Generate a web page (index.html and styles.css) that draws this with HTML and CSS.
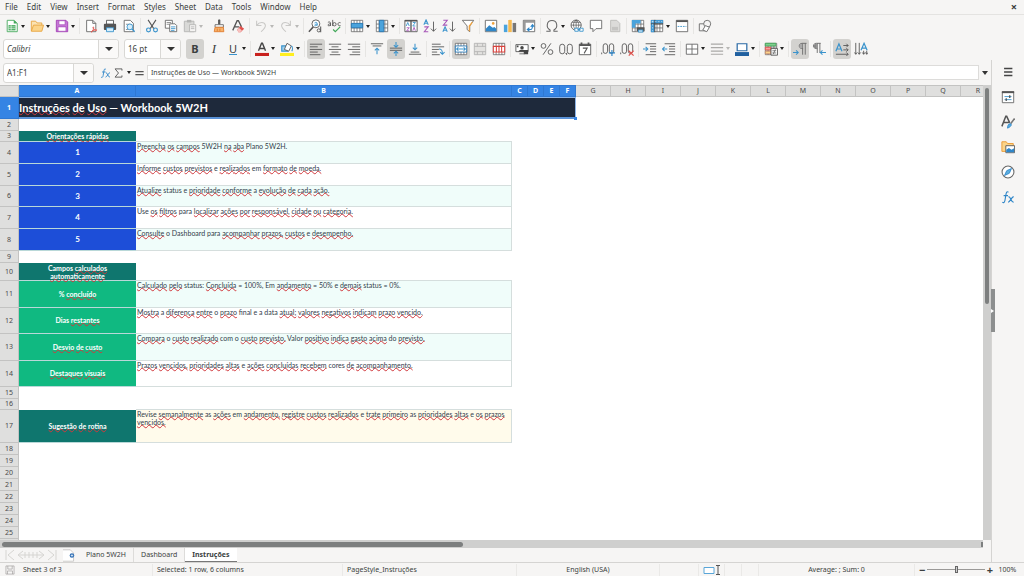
FILE: index.html
```html
<!DOCTYPE html>
<html lang="pt-BR">
<head>
<meta charset="utf-8">
<meta name="viewport" content="width=device-width, initial-scale=1">
<title>Workbook 5W2H</title>
<link rel="stylesheet" href="styles.css">
</head>
<body>
<svg class="sprite" aria-hidden="true">
  <symbol id="new" viewBox="0 0 16 16"><path d="M2.5 1.500h8l3.500 3.500v9.500H2.500z" fill="#fff" stroke="#43a85a"/><path d="M4 7h8v6H4z" fill="#43a85a"/><path d="M4 9h8M4 11h8M7 7v6" stroke="#fff" stroke-width=".7"/><path d="M10 1v4h4z" fill="#43a85a"/></symbol>
  <symbol id="open" viewBox="0 0 16 16"><path d="M1.500 13.500v-11h5l1.500 2h5.500v3" fill="#fbe3b3" stroke="#e8a33d"/><path d="M1.500 14l2.500-7h11.500l-2 7z" fill="#fbd48a" stroke="#e8a33d"/></symbol>
  <symbol id="save" viewBox="0 0 16 16"><path d="M1.500 1.500h11l2 2v11h-13z" fill="#c678d6" stroke="#a13fb5"/><path d="M4.500 2h7v4.500h-7zM3.500 9h9v5h-9z" fill="#fff" stroke="#a13fb5" stroke-width=".7"/></symbol>
  <symbol id="pdf" viewBox="0 0 16 16"><path d="M3 1.500h7l3.500 3.500v9.500H3z" fill="#fff" stroke="#666"/><path d="M10 1.500V5h3.500" fill="none" stroke="#666"/><path d="M8 15c2-1 3.500-4 3-5.500s-1.500.5.5 2.500 3 1.500 3 .5-4 0-6.500 2.500" fill="#fff" stroke="#e0524d"/></symbol>
  <symbol id="print" viewBox="0 0 16 16"><path d="M4 1.500h8V6H4z" fill="#fff" stroke="#555"/><rect x="1" y="5.500" width="14" height="7" rx="1" fill="#555"/><path d="M4 10h8v4.500H4z" fill="#d7eefb" stroke="#3a93cc"/></symbol>
  <symbol id="preview" viewBox="0 0 16 16"><path d="M2.500 1.500h7l3.500 3.500v9.500H2.500z" fill="#fff" stroke="#666"/><path d="M4.500 6h5M4.500 12h3" stroke="#888"/><circle cx="9" cy="9" r="3.300" fill="#d7eefb" stroke="#3a93cc"/><path d="M11.500 11.500l3 3" stroke="#3a93cc" stroke-width="1.500"/></symbol>
  <symbol id="cut" viewBox="0 0 16 16"><path d="M3.500 1l6.500 10M12.500 1L6 11" stroke="#555" stroke-width="1.200"/><circle cx="4" cy="12.500" r="2.200" fill="none" stroke="#3a93cc" stroke-width="1.300"/><circle cx="12" cy="12.500" r="2.200" fill="none" stroke="#3a93cc" stroke-width="1.300"/></symbol>
  <symbol id="copy" viewBox="0 0 16 16"><path d="M1.500 1.500h8v9h-8z" fill="#fff" stroke="#666"/><path d="M3 4h5M3 6h3" stroke="#888"/><path d="M6.500 5.500h6l2 2v7h-8z" fill="#fff" stroke="#666"/><path d="M8 9h5M8 11h5M8 13h4" stroke="#3a93cc"/></symbol>
  <symbol id="paste" viewBox="0 0 16 16"><path d="M1.500 2.500h11v12h-11z" fill="#d9d9d7" stroke="#b5b5b3"/><path d="M4.500 1h5v3h-5z" fill="#b5b5b3"/><path d="M7.500 6.500h7v8h-7z" fill="#f6f5f4" stroke="#b5b5b3"/><path d="M9 9h4M9 11h4" stroke="#b5b5b3"/></symbol>
  <symbol id="clone" viewBox="0 0 16 16"><path d="M7.500 1h1.500v5h-1.500z" fill="#555" stroke="#555"/><path d="M3.500 6.500h9.500v3H3.500z" fill="#fff" stroke="#666"/><path d="M3.500 9.500h9.500l.5 5h-11z" fill="#f6b26b" stroke="#e07b2f"/><path d="M6 11v3M9 11v3" stroke="#e07b2f"/></symbol>
  <symbol id="clear" viewBox="0 0 16 16"><path d="M2 13L7 2h1.500L12 9M4 9h5.500" fill="none" stroke="#555" stroke-width="1.500"/><path d="M7 12l4-4 4 3-4 4H8.500z" fill="#e0524d"/><path d="M7 12l2-2 3.500 3-2 2H8.500z" fill="#f7c1bf"/></symbol>
  <symbol id="undo" viewBox="0 0 16 16"><path d="M3 2v5.500h5.500M3.500 7C6 3 12 3 13 7c.5 3-2 5-5 7.500" fill="none" stroke="#c9c8c6" stroke-width="1.200"/></symbol>
  <symbol id="redo" viewBox="0 0 16 16"><path d="M13 2v5.500H7.500M12.500 7C10 3 4 3 3 7c-.5 3 2 5 5 7.500" fill="none" stroke="#c9c8c6" stroke-width="1.200"/></symbol>
  <symbol id="find" viewBox="0 0 16 16"><circle cx="9" cy="5.500" r="4.500" fill="#fff" stroke="#555"/><path d="M6 9l-5 5.500" stroke="#555" stroke-width="1.700"/><path d="M7.500 4.500c1-1 3-.8 3 .5v2.500M10.500 5.800c-3-.2-3.500 1.700-2 1.900 1 0 2-.7 2-1.400" fill="none" stroke="#3a93cc"/><path d="M14.500 8.500v6.500" stroke="#555" stroke-width="1.200"/><circle cx="12.300" cy="13" r="1.800" fill="none" stroke="#555"/></symbol>
  <symbol id="spell" viewBox="0 0 16 16"><path d="M1 4c1-1 3-.8 3 .5V8M4 5.500C1 5.200.5 7.800 2 7.800c1 0 2-.7 2-1.400M6.500 1v7" fill="none" stroke="#555"/><circle cx="8.500" cy="6" r="1.900" fill="none" stroke="#555"/><path d="M15.500 4.300c-4-1.500-4 4.500 0 3.300" fill="none" stroke="#555"/><path d="M7 12l2.500 2.500L15 9" fill="none" stroke="#43a85a" stroke-width="1.400"/></symbol>
  <symbol id="grid" viewBox="0 0 16 16"><path d="M1.500 1.500h13v13h-13zM1.500 5.800h13M1.500 10.200h13M4.700 1.500v13M8 1.500v13M11.300 1.500v13" fill="#fff" stroke="#666" stroke-width=".9"/></symbol>
  <symbol id="row" viewBox="0 0 16 16"><use href="#grid"/><path d="M1.500 5h13v5h-13z" fill="#4aa3dc" stroke="#2577b5"/></symbol>
  <symbol id="col" viewBox="0 0 16 16"><use href="#grid"/><path d="M5 1.500h5v13H5z" fill="#4aa3dc" stroke="#2577b5"/></symbol>
  <symbol id="sort" viewBox="0 0 16 16"><path d="M1 1.500h14v13H1z" fill="#fff" stroke="#555"/><path d="M1 2h14M8 2v12" stroke="#555" stroke-width="1.500"/><path d="M2.500 8l1.800-4 1.700 4M10 4h3l-3 4h3" fill="none" stroke="#3a93cc"/><path d="M3 10h3l-3 3.500h3M10 13.500l1.500-4 1.500 4" fill="none" stroke="#a858b8"/></symbol>
  <symbol id="az" viewBox="0 0 16 16"><path d="M1 6.500L3.500 1 6 6.500M2 4.800h3" fill="none" stroke="#3a93cc" stroke-width="1.200"/><path d="M1.500 9H6l-4.500 5.500H6" fill="none" stroke="#a858b8" stroke-width="1.200"/><path d="M12 3v11M9 11l3 3 3-3" fill="none" stroke="#555"/></symbol>
  <symbol id="za" viewBox="0 0 16 16"><path d="M1.500 1.500H6L1.500 7H6" fill="none" stroke="#a858b8" stroke-width="1.200"/><path d="M1 14.500L3.500 9 6 14.500M2 12.800h3" fill="none" stroke="#3a93cc" stroke-width="1.200"/><path d="M12 3v11M9 11l3 3 3-3" fill="none" stroke="#555"/></symbol>
  <symbol id="filter" viewBox="0 0 16 16"><path d="M1.500 1.500h13L10 8v6.500L7 12V8z" fill="#fff" stroke="#666"/><path d="M13 3.500L9.500 8v6" fill="none" stroke="#f0a23c" stroke-width="1.400"/></symbol>
  <symbol id="image" viewBox="0 0 16 16"><path d="M1.500 1.500h13v13h-13z" fill="#fff" stroke="#666"/><path d="M2 14v-3l4-4 4 3 2-1 2 2v3z" fill="#2f86c8"/><circle cx="10.500" cy="5" r="1.500" fill="#f0a23c"/></symbol>
  <symbol id="chart" viewBox="0 0 16 16"><path d="M1 6.500h4V15H1z" fill="#4aa3dc"/><path d="M6 1h4v14H6z" fill="#f6b94f"/><path d="M11 4.500h4V15h-4z" fill="#777"/></symbol>
  <symbol id="pivot" viewBox="0 0 16 16"><path d="M1.500 1.500h13v13h-13z" fill="#fff" stroke="#666"/><path d="M2 3h12M3 2v12" stroke="#9a9a9a" stroke-width="2.400"/><path d="M7 12h3c2 0 2-1.500 2-4.500M10 9l2-2.500L14 9M8.500 10L6 12l2.500 2" fill="none" stroke="#2f86c8" stroke-width="1.200"/></symbol>
  <symbol id="omega" viewBox="0 0 16 16"><path d="M1.500 14h4.300v-1.500C.5 9.500 2 1.800 8 1.800s7.500 7.700 2.200 10.700V14h4.300" fill="none" stroke="#666" stroke-width="1.200"/></symbol>
  <symbol id="link" viewBox="0 0 16 16"><circle cx="7" cy="7" r="5.800" fill="#fff" stroke="#555"/><path d="M7 1.200v11.600M1.200 7h11.600M2.500 3.800h9M7 1.200c-4 3-4 8 0 11.600M7 1.200c4 3 4 8 0 11.600" fill="none" stroke="#555" stroke-width=".8"/><path d="M5.500 10.500h4v3.500h-4zM11 10.500h4v3.500h-4zM8.500 12.200h3.500" fill="#fff" stroke="#3a93cc"/></symbol>
  <symbol id="comment" viewBox="0 0 16 16"><path d="M1.500 1.500h13v9.500H8l-3.500 3.500V11h-3z" fill="#fff" stroke="#666"/></symbol>
  <symbol id="header" viewBox="0 0 16 16"><path d="M3 1.500h7l3.500 3.500v9.500H3z" fill="#dcdbd9" stroke="#bbbab8"/><path d="M4.500 9h7v4h-7z" fill="#c5c4c2"/></symbol>
  <symbol id="area" viewBox="0 0 16 16"><use href="#grid"/><path d="M1 1h10v4H1zM1 5h4v5H1z" fill="#4aa3dc"/><path d="M6.500 9.500h9v4.500h-9z" fill="#555"/><path d="M8.500 12.500h5V15h-5z" fill="#d7eefb" stroke="#3a93cc"/></symbol>
  <symbol id="freeze" viewBox="0 0 16 16"><use href="#grid"/><path d="M1 1h14v4H1zM1 1h4v14H1z" fill="#3f97d2"/><path d="M1 5.500h14M5.500 1v14" stroke="#444"/><path d="M2 3h12M3 2v12" stroke="#fff" stroke-width=".6" stroke-dasharray="2 1.500"/></symbol>
  <symbol id="split" viewBox="0 0 16 16"><path d="M1.500 1.500h13v13h-13z" fill="#fff" stroke="#666"/><path d="M1.500 2.500h13" stroke="#555" stroke-width="2"/><path d="M3 8.500h10" stroke="#3a93cc" stroke-dasharray="2 1"/></symbol>
  <symbol id="shapes" viewBox="0 0 16 16"><path d="M1.500 5.500h8v8h-8z" fill="none" stroke="#666"/><circle cx="10.500" cy="5.500" r="4" fill="#f6f5f4" stroke="#666"/><path d="M8.500 7.500l4.500 2-3 5-4.500-2z" fill="#fff" stroke="#666"/></symbol>
  <symbol id="fontcolor" viewBox="0 0 16 16"><path d="M4 10L7.500 1.500h1L12 10M5.300 7.500h5.500" fill="none" stroke="#444" stroke-width="1.600"/><path d="M0 12.500h16V16H0z" fill="#c9211e"/></symbol>
  <symbol id="highlight" viewBox="0 0 16 16"><path d="M2 4.500h7v6H2z" fill="#9fd0ee" stroke="#3a93cc" stroke-width="1.300"/><path d="M8 1.500l5 3-3 6-5-2z" fill="#fff" stroke="#555"/><path d="M13 4.500c1.500 1 1.500 4 .5 6" fill="none" stroke="#3a93cc" stroke-width="1.300"/><path d="M0 12.500h16V16H0z" fill="#ffee1f"/></symbol>
  <symbol id="left" viewBox="0 0 16 16"><path d="M1 2.500h14M1 5.500h9M1 8.500h14M1 11.500h9M1 14.500h12" stroke="#555"/></symbol>
  <symbol id="center" viewBox="0 0 16 16"><path d="M1 2.500h14M4 5.500h8M1 8.500h14M4 11.500h8M2 14.500h12" stroke="#555"/></symbol>
  <symbol id="right" viewBox="0 0 16 16"><path d="M1 2.500h14M6 5.500h9M1 8.500h14M6 11.500h9M3 14.500h12" stroke="#555"/></symbol>
  <symbol id="top" viewBox="0 0 16 16"><path d="M1 2h14M3 4.500h10" stroke="#555"/><path d="M8 14V7M5.500 9.500L8 7l2.500 2.500" fill="none" stroke="#3a93cc" stroke-width="1.200"/></symbol>
  <symbol id="middle" viewBox="0 0 16 16"><path d="M1 7h14M1 9.500h14" stroke="#555"/><path d="M8 0v5.500M5.500 3.500L8 6l2.500-2.500M8 16v-5.500M5.500 13L8 10.500l2.500 2.500" fill="none" stroke="#3a93cc" stroke-width="1.200"/></symbol>
  <symbol id="bottom" viewBox="0 0 16 16"><path d="M1 14h14M3 11.500h10" stroke="#555"/><path d="M8 2v7M5.500 6.500L8 9l2.500-2.500" fill="none" stroke="#3a93cc" stroke-width="1.200"/></symbol>
  <symbol id="wrap" viewBox="0 0 16 16"><path d="M1 2.500h10M1 5.500h14M1 8.500h8M1 11.500h6M1 14.500h9" stroke="#555"/><path d="M9 8c3 0 4 1 4 5M10.500 11.500L13 14l2.500-2.500" fill="none" stroke="#3a93cc" stroke-width="1.200"/></symbol>
  <symbol id="merge" viewBox="0 0 16 16"><use href="#grid"/><path d="M1.500 4.500h13v7h-13z" fill="#fff" stroke="#2577b5"/><path d="M3 8h10M5 6L3 8l2 2M11 6l2 2-2 2" fill="none" stroke="#3a93cc" stroke-width="1.200"/></symbol>
  <symbol id="mergecells" viewBox="0 0 16 16"><path d="M1.500 1.500h13v13h-13zM1.500 5h13M1.500 11h13M5 1.500V5M11 1.500V5M5 11v3.500M11 11v3.500" fill="#e3e2e0" stroke="#b5b5b3"/></symbol>
  <symbol id="unmerge" viewBox="0 0 16 16"><use href="#grid"/><path d="M1.500 5h13v6.500h-13zM5 5v6.500M8 5v6.500M11 5v6.500" fill="#fff" stroke="#d9423d" stroke-width="1.200"/></symbol>
  <symbol id="currency" viewBox="0 0 16 16"><path d="M1 3h14v8H1z" fill="#fff" stroke="#555"/><circle cx="8" cy="6.500" r="2" fill="#444"/><path d="M4 11c0-3 8-3 8 0zM2 4h2v2H2zM10 9h5v5h-5z" fill="#444"/><path d="M5 13.500h6" stroke="#666"/></symbol>
  <symbol id="percent" viewBox="0 0 16 16"><circle cx="4" cy="4.500" r="2.700" fill="none" stroke="#555"/><circle cx="12" cy="11.500" r="2.700" fill="none" stroke="#555"/><path d="M12.500 1.500l-9 13" stroke="#555"/></symbol>
  <symbol id="number" viewBox="0 0 16 16"><rect x=".8" y="2.500" width="5.700" height="11" rx="2.800" fill="none" stroke="#555"/><rect x="9.500" y="2.500" width="5.700" height="11" rx="2.800" fill="none" stroke="#555"/><path d="M7.500 13h1.200v1.500" stroke="#555"/></symbol>
  <symbol id="date" viewBox="0 0 16 16"><path d="M1.500 2.500h13v12h-13z" fill="#fff" stroke="#555"/><path d="M1.500 3.500h13M4 .500v3M12 .500v3" stroke="#555" stroke-width="2"/><path d="M5.500 7h5L7 13" fill="none" stroke="#555" stroke-width="1.200"/></symbol>
  <symbol id="decadd" viewBox="0 0 16 16"><path d="M.8 12v2" stroke="#555"/><rect x="2.500" y="2" width="5" height="11" rx="2.500" fill="none" stroke="#555"/><rect x="9.500" y="2" width="5" height="11" rx="2.500" fill="none" stroke="#555"/><path d="M9 12.500h7M12.500 9v7" stroke="#2f86c8" stroke-width="1.300"/></symbol>
  <symbol id="decdel" viewBox="0 0 16 16"><path d="M.8 12v2" stroke="#555"/><rect x="2.500" y="2" width="5" height="11" rx="2.500" fill="none" stroke="#555"/><rect x="9.500" y="2" width="5" height="11" rx="2.500" fill="none" stroke="#555"/><path d="M10 10l5.500 5.500M15.500 10L10 15.500" stroke="#e0524d" stroke-width="1.300"/></symbol>
  <symbol id="indent" viewBox="0 0 16 16"><path d="M3 2h12M8 5h7M8 8h7M8 11h7M3 14.500h12" stroke="#555"/><path d="M0 8h5.500M3 5.500L5.500 8 3 10.500" fill="none" stroke="#3a93cc" stroke-width="1.200"/></symbol>
  <symbol id="outdent" viewBox="0 0 16 16"><path d="M3 2h12M8 5h7M8 8h7M8 11h7M3 14.500h12" stroke="#555"/><path d="M.5 8H6M3 5.500L.5 8 3 10.500" fill="none" stroke="#3a93cc" stroke-width="1.200"/></symbol>
  <symbol id="borders" viewBox="0 0 16 16"><path d="M1.500 2.500h13v11.500h-13zM8 2.500V14M1.500 8h13" fill="#fff" stroke="#666"/></symbol>
  <symbol id="style" viewBox="0 0 16 16"><path d="M1 2.500h14M1 6.500h14M1 10.500h14M1 14h14" stroke="#aaa9a7" stroke-width="1.400"/></symbol>
  <symbol id="bcolor" viewBox="0 0 16 16"><path d="M2.500 2h11v8h-11z" fill="#fff" stroke="#2a6aa5" stroke-width="1.400"/><path d="M0 11.500h16V16H0z" fill="#2060a0"/></symbol>
  <symbol id="cond" viewBox="0 0 16 16"><use href="#grid"/><path d="M1.500 1.500h12v3h-12z" fill="#7fcf8e" stroke="#43a85a"/><path d="M1.500 6h6v3h-6z" fill="#f6a19e" stroke="#e0524d"/><path d="M1.500 10.500h6v3h-6z" fill="#fbd48a" stroke="#c98b6b"/><path d="M8 7.500h7.500V15H8z" fill="#fff" stroke="#555"/><path d="M9.500 10h4.500M9.500 12.500h4.500M13 8.500l-2.500 5.500" stroke="#555" stroke-width=".8"/></symbol>
  <symbol id="ltr" viewBox="0 0 16 16"><path d="M15.500 1.500h-5c-4.500 0-4.500 6 0 6h1M11 1.500v13M14 1.500v13" fill="none" stroke="#666"/><path d="M10.500 2v5.500C6.500 7.500 6.500 2 10.500 2" fill="#aaa"/><path d="M0 12h6M3.500 9.500L6 12l-2.500 2.500" fill="none" stroke="#3a93cc" stroke-width="1.200"/></symbol>
  <symbol id="rtl" viewBox="0 0 16 16"><path d="M10 1.500H5c-4.500 0-4.500 6 0 6h1M6 1.500v11M9 1.500v11" fill="none" stroke="#666"/><path d="M5.500 2v5.500C1 7.500 1 2 5.500 2" fill="#888"/><path d="M9.500 12H16M12 9.500L9.500 12l2.500 2.500" fill="none" stroke="#3a93cc" stroke-width="1.200"/></symbol>
  <symbol id="texth" viewBox="0 0 16 16"><path d="M1 10.500L4.500 2 8 10.500M2.500 8h4" fill="none" stroke="#3a93cc" stroke-width="1.400"/><path d="M9.500 4H15M9.500 9H15M1 14h14M13 2l2 2-2 2M13 7l2 2-2 2M13 12l2 2-2 2" fill="none" stroke="#555"/></symbol>
  <symbol id="textv" viewBox="0 0 16 16"><path d="M8 9.500L11.500 1.500 15 9.500M9.500 7h4" fill="none" stroke="#3a93cc" stroke-width="1.400"/><path d="M2 1v13M6 1v13M11 10v4M14.500 10v4M.5 12L2 14l1.500-2M4.500 12L6 14l1.500-2M9.500 12l1.500 2 1.500-2M13 12l1.500 2 1.500-2" fill="none" stroke="#555"/></symbol>
  <symbol id="fx" viewBox="0 0 16 16"><path d="M8.500 2.500C6.500 1 6 3 5.500 6L4.500 12c-.5 2.500-1.500 2.800-3 2M3 6.500h5" fill="none" stroke="#2f86c8" stroke-width="1.300"/><path d="M8.500 7.500c3 0 2.500 6.500 6 6.500M14.500 7.500c-2.500 0-4 6.500-6.500 6.500" fill="none" stroke="#2f86c8" stroke-width="1.300"/></symbol>
  <symbol id="sigma" viewBox="0 0 16 16"><path d="M13 4.500V2H3l5 6-5 6h10v-2.500" fill="none" stroke="#555" stroke-width="1.300"/></symbol>
  <symbol id="equal" viewBox="0 0 16 16"><path d="M2 6h12M2 10.500h12" stroke="#555" stroke-width="1.800"/></symbol>
  <symbol id="menu" viewBox="0 0 16 16"><path d="M3.500 4h9.500M3.500 8h9.500M3.500 12h9.500" stroke="#444" stroke-width="1.800"/></symbol>
  <symbol id="props" viewBox="0 0 16 16"><path d="M1.500 2h13v12.500h-13z" fill="#fff" stroke="#666"/><path d="M1 2.500h14" stroke="#555" stroke-width="2.200"/><path d="M4 7.500h8M4 11h8" stroke="#3a93cc"/><path d="M10 6v3M6 9.500v3" stroke="#555" stroke-width="1.500"/></symbol>
  <symbol id="styles" viewBox="0 0 16 16"><path d="M1 13L5.500 1.500h1L10 9M3 8.500h6" fill="none" stroke="#555" stroke-width="1.700"/><path d="M15.500 4L11 10" stroke="#777" stroke-width="1.700"/><path d="M7.500 15c0-3 1-5 3-5s2 3-3 5z" fill="#5aaee0" stroke="#2f86c8"/></symbol>
  <symbol id="gallery" viewBox="0 0 16 16"><path d="M1 13V2h5l1.500 2H14v9z" fill="#fbd48a" stroke="#e8962e"/><path d="M5.500 6.500h10v8h-10z" fill="#fff" stroke="#555"/><path d="M6 14v-3l3-2 3 2 3-1.500V14z" fill="#2f86c8"/></symbol>
  <symbol id="compass" viewBox="0 0 16 16"><circle cx="8" cy="8" r="6.800" fill="#fff" stroke="#666" stroke-width="1.200"/><path d="M12 4L9.500 9.500 4 12l2.500-5.500z" fill="#5aaee0" stroke="#2f86c8"/></symbol>
  <symbol id="disk" viewBox="0 0 16 16"><path d="M1.500 1.500h13v13h-13zM4.500 1.500v5h7v-5M4 14.500v-5h8v5" fill="none" stroke="#9a9997"/></symbol>
  <symbol id="addsheet" viewBox="0 0 16 16"><path d="M0 1h9l4 4v10H0" fill="#fff" stroke="#c3c2c0"/><circle cx="11" cy="8" r="2.800" fill="#2f6fb5"/><path d="M9.500 8h3M11 6.500v3" stroke="#fff" stroke-width=".8"/></symbol>
  <symbol id="nav" viewBox="0 0 52 12"><path d="M1 1v10M9 1L3 6l6 5M18 2l-5 4 5 4M34 2l5 4-5 4M43 1l6 5-6 5M51 1v10M14 6h24M20 3v6M24 3v6M28 3v6M32 3v6" fill="none" stroke="#d6d5d2"/></symbol>
  <symbol id="selmode" viewBox="0 0 18 10"><path d="M1 2.500h10v6H1z" fill="#fff" stroke="#5aa6d8"/><path d="M13 .500h4M13 9.500h4M15 .500v9" stroke="#555"/></symbol>
</svg>

<header class="menubar">
  <nav class="menus" aria-label="Menu">
    <button>File</button><button>Edit</button><button>View</button><button>Insert</button><button>Format</button><button>Styles</button><button>Sheet</button><button>Data</button><button>Tools</button><button>Window</button><button>Help</button>
  </nav>
  <button class="close" aria-label="Close document">×</button>
</header>

<div class="toolbar" role="toolbar" aria-label="Standard">
  <div class="group">
    <div class="pair"><button class="tool" aria-label="New"><svg><use href="#new"/></svg></button><button class="more" aria-label="New options"></button></div>
    <div class="pair"><button class="tool" aria-label="Open"><svg><use href="#open"/></svg></button><button class="more" aria-label="Recent files"></button></div>
    <div class="pair"><button class="tool" aria-label="Save"><svg><use href="#save"/></svg></button><button class="more" aria-label="Save options"></button></div>
  </div>
  <div class="group">
    <button class="tool" aria-label="Export as PDF"><svg><use href="#pdf"/></svg></button>
    <button class="tool" aria-label="Print"><svg><use href="#print"/></svg></button>
    <button class="tool" aria-label="Print preview"><svg><use href="#preview"/></svg></button>
  </div>
  <div class="group">
    <button class="tool" aria-label="Cut"><svg><use href="#cut"/></svg></button>
    <button class="tool" aria-label="Copy"><svg><use href="#copy"/></svg></button>
    <div class="pair"><button class="tool" aria-label="Paste"><svg><use href="#paste"/></svg></button><button class="more dim" aria-label="Paste options"></button></div>
  </div>
  <div class="group bare">
    <button class="tool" aria-label="Clone formatting"><svg><use href="#clone"/></svg></button>
    <button class="tool" aria-label="Clear formatting"><svg><use href="#clear"/></svg></button>
  </div>
  <div class="group">
    <div class="pair"><button class="tool" aria-label="Undo"><svg><use href="#undo"/></svg></button><button class="more dim" aria-label="Undo history"></button></div>
    <div class="pair"><button class="tool" aria-label="Redo"><svg><use href="#redo"/></svg></button><button class="more dim" aria-label="Redo history"></button></div>
  </div>
  <div class="group">
    <button class="tool" aria-label="Find and replace"><svg><use href="#find"/></svg></button>
    <button class="tool" aria-label="Spelling"><svg><use href="#spell"/></svg></button>
  </div>
  <div class="group">
    <div class="pair"><button class="tool" aria-label="Row"><svg><use href="#row"/></svg></button><button class="more" aria-label="Row options"></button></div>
    <div class="pair"><button class="tool" aria-label="Column"><svg><use href="#col"/></svg></button><button class="more" aria-label="Column options"></button></div>
  </div>
  <div class="group">
    <button class="tool" aria-label="Sort"><svg><use href="#sort"/></svg></button>
    <button class="tool" aria-label="Sort ascending"><svg><use href="#az"/></svg></button>
    <button class="tool" aria-label="Sort descending"><svg><use href="#za"/></svg></button>
    <button class="tool" aria-label="AutoFilter"><svg><use href="#filter"/></svg></button>
  </div>
  <div class="group">
    <button class="tool" aria-label="Image"><svg><use href="#image"/></svg></button>
    <button class="tool" aria-label="Chart"><svg><use href="#chart"/></svg></button>
    <button class="tool" aria-label="Pivot table"><svg><use href="#pivot"/></svg></button>
  </div>
  <div class="group">
    <div class="pair"><button class="tool" aria-label="Symbol"><svg><use href="#omega"/></svg></button><button class="more" aria-label="Symbol options"></button></div>
    <button class="tool" aria-label="Hyperlink"><svg><use href="#link"/></svg></button>
    <button class="tool" aria-label="Comment"><svg><use href="#comment"/></svg></button>
    <button class="tool" aria-label="Headers and footers"><svg><use href="#header"/></svg></button>
  </div>
  <div class="group">
    <button class="tool" aria-label="Print area"><svg><use href="#area"/></svg></button>
    <div class="pair"><button class="tool" aria-label="Freeze"><svg><use href="#freeze"/></svg></button><button class="more" aria-label="Freeze options"></button></div>
    <button class="tool" aria-label="Split window"><svg><use href="#split"/></svg></button>
  </div>
  <div class="group">
    <button class="tool" aria-label="Draw functions"><svg><use href="#shapes"/></svg></button>
  </div>
</div>

<div class="toolbar" role="toolbar" aria-label="Formatting">
  <div class="combo fontname"><select aria-label="Font name"><option>Calibri</option></select></div>
  <div class="combo fontsize"><select aria-label="Font size"><option>16 pt</option></select></div>
  <div class="group bare">
    <button class="tool on" aria-label="Bold"><b>B</b></button>
    <button class="tool" aria-label="Italic"><i>I</i></button>
    <div class="pair"><button class="tool" aria-label="Underline"><span class="under">U</span></button><button class="more" aria-label="Underline options"></button></div>
  </div>
  <div class="group">
    <div class="pair"><button class="tool" aria-label="Font color"><svg><use href="#fontcolor"/></svg></button><button class="more" aria-label="Font colors"></button></div>
    <div class="pair"><button class="tool" aria-label="Highlighting"><svg><use href="#highlight"/></svg></button><button class="more" aria-label="Highlighting colors"></button></div>
  </div>
  <div class="group">
    <button class="tool on" aria-label="Align left"><svg><use href="#left"/></svg></button>
    <button class="tool" aria-label="Center"><svg><use href="#center"/></svg></button>
    <button class="tool" aria-label="Align right"><svg><use href="#right"/></svg></button>
  </div>
  <div class="group">
    <button class="tool" aria-label="Align top"><svg><use href="#top"/></svg></button>
    <button class="tool on" aria-label="Center vertically"><svg><use href="#middle"/></svg></button>
    <button class="tool" aria-label="Align bottom"><svg><use href="#bottom"/></svg></button>
  </div>
  <div class="group">
    <button class="tool" aria-label="Wrap text"><svg><use href="#wrap"/></svg></button>
  </div>
  <div class="group">
    <button class="tool on" aria-label="Merge and center"><svg><use href="#merge"/></svg></button>
    <button class="tool" aria-label="Merge cells"><svg><use href="#mergecells"/></svg></button>
    <button class="tool" aria-label="Unmerge cells"><svg><use href="#unmerge"/></svg></button>
  </div>
  <div class="group">
    <div class="pair"><button class="tool" aria-label="Currency"><svg><use href="#currency"/></svg></button><button class="more" aria-label="Currency options"></button></div>
    <button class="tool" aria-label="Percent"><svg><use href="#percent"/></svg></button>
    <button class="tool" aria-label="Number"><svg><use href="#number"/></svg></button>
    <button class="tool" aria-label="Date"><svg><use href="#date"/></svg></button>
  </div>
  <div class="group">
    <button class="tool" aria-label="Add decimal place"><svg><use href="#decadd"/></svg></button>
    <button class="tool" aria-label="Delete decimal place"><svg><use href="#decdel"/></svg></button>
  </div>
  <div class="group">
    <button class="tool" aria-label="Increase indent"><svg><use href="#indent"/></svg></button>
    <button class="tool" aria-label="Decrease indent"><svg><use href="#outdent"/></svg></button>
  </div>
  <div class="group">
    <div class="pair"><button class="tool" aria-label="Borders"><svg><use href="#borders"/></svg></button><button class="more" aria-label="Border options"></button></div>
    <div class="pair"><button class="tool" aria-label="Border style"><svg><use href="#style"/></svg></button><button class="more dim" aria-label="Border styles"></button></div>
    <div class="pair"><button class="tool" aria-label="Border color"><svg><use href="#bcolor"/></svg></button><button class="more" aria-label="Border colors"></button></div>
  </div>
  <div class="group">
    <div class="pair"><button class="tool" aria-label="Conditional formatting"><svg><use href="#cond"/></svg></button><button class="more" aria-label="Conditional options"></button></div>
  </div>
  <div class="group">
    <button class="tool on" aria-label="Left to right"><svg><use href="#ltr"/></svg></button>
    <button class="tool" aria-label="Right to left"><svg><use href="#rtl"/></svg></button>
  </div>
  <div class="group">
    <button class="tool on" aria-label="Text horizontal"><svg><use href="#texth"/></svg></button>
    <button class="tool" aria-label="Text vertical"><svg><use href="#textv"/></svg></button>
  </div>
</div>

<div class="workspace">
  <main class="document">
    <div class="formulabar">
      <div class="combo namebox"><input type="text" aria-label="Name box" value="A1:F1"></div>
      <div class="functions">
        <button aria-label="Function wizard"><svg><use href="#fx"/></svg></button>
        <button aria-label="Select function"><svg><use href="#sigma"/></svg></button>
        <button class="more" aria-label="Functions"></button>
        <button aria-label="Formula"><svg><use href="#equal"/></svg></button>
      </div>
      <input class="formula" type="text" aria-label="Input line" value="Instruções de Uso — Workbook 5W2H">
      <button class="expand" aria-label="Expand formula bar"></button>
    </div>

    <div class="viewport">
      <div class="cells">
        <table>
          <colgroup><col class="c-head"><col class="c-a"><col class="c-b"><col class="c-s" span="4"><col class="c-n" span="12"></colgroup>
          <thead>
            <tr><th></th><th class="sel">A</th><th class="sel">B</th><th class="sel">C</th><th class="sel">D</th><th class="sel">E</th><th class="sel">F</th><th>G</th><th>H</th><th>I</th><th>J</th><th>K</th><th>L</th><th>M</th><th>N</th><th>O</th><th>P</th><th>Q</th><th>R</th></tr>
          </thead>
          <tbody>
            <tr class="h22"><th class="sel">1</th><td class="title" colspan="6"><u>Instruções</u> <u>de</u> <u>Uso</u> — Workbook 5W2H</td></tr>
            <tr class="h12"><th>2</th></tr>
            <tr class="h11"><th>3</th><td class="teal"><u>Orientações</u> <u>rápidas</u></td><td class="lead"></td></tr>
            <tr class="h22"><th>4</th><td class="blue">1</td><td class="note mint"><u>Preencha</u> <u>os</u> <u>campos</u> 5W2H <u>na</u> <u>aba</u> Plano 5W2H.</td></tr>
            <tr class="h22"><th>5</th><td class="blue">2</td><td class="note"><u>Informe</u> <u>custos</u> <u>previstos</u> e <u>realizados</u> em <u>formato</u> <u>de</u> <u>moeda.</u></td></tr>
            <tr class="h21"><th>6</th><td class="blue">3</td><td class="note mint"><u>Atualize</u> status e <u>prioridade</u> <u>conforme</u> a <u>evolução</u> <u>de</u> <u>cada</u> <u>ação.</u></td></tr>
            <tr class="h22"><th>7</th><td class="blue">4</td><td class="note">Use <u>os</u> <u>filtros</u> para <u>localizar</u> <u>ações</u> <u>por</u> <u>responsável,</u> <u>cidade</u> <u>ou</u> <u>categoria.</u></td></tr>
            <tr class="h22"><th>8</th><td class="blue">5</td><td class="note mint"><u>Consulte</u> o Dashboard para <u>acompanhar</u> <u>prazos,</u> <u>custos</u> e <u>desempenho.</u></td></tr>
            <tr class="h12"><th>9</th></tr>
            <tr class="h18"><th>10</th><td class="teal">Campos <u>calculados</u> <u>automaticamente</u></td><td class="lead"></td></tr>
            <tr class="h27"><th>11</th><td class="green">% <u>concluído</u></td><td class="note mint"><u>Calculado</u> <u>pelo</u> status: <u>Concluída</u> = 100%, Em <u>andamento</u> = 50% e <u>demais</u> status = 0%.</td></tr>
            <tr class="h26"><th>12</th><td class="green">Dias <u>restantes</u></td><td class="note"><u>Mostra</u> a <u>diferença</u> <u>entre</u> o <u>prazo</u> final e a data <u>atual;</u> <u>valores</u> <u>negativos</u> <u>indicam</u> <u>prazo</u> <u>vencido.</u></td></tr>
            <tr class="h27"><th>13</th><td class="green"><u>Desvio</u> <u>de</u> <u>custo</u></td><td class="note mint"><u>Compara</u> o <u>custo</u> <u>realizado</u> com o <u>custo</u> <u>previsto.</u> Valor <u>positivo</u> <u>indica</u> <u>gasto</u> <u>acima</u> do <u>previsto.</u></td></tr>
            <tr class="h26"><th>14</th><td class="green"><u>Destaques</u> <u>visuais</u></td><td class="note"><u>Prazos</u> <u>vencidos,</u> <u>prioridades</u> <u>altas</u> e <u>ações</u> <u>concluídas</u> <u>recebem</u> cores <u>de</u> <u>acompanhamento.</u></td></tr>
            <tr class="h12"><th>15</th></tr>
            <tr class="h11"><th>16</th><td></td><td class="lead"></td></tr>
            <tr class="h33"><th>17</th><td class="teal"><u>Sugestão</u> <u>de</u> <u>rotina</u></td><td class="note cream">Revise <u>semanalmente</u> as <u>ações</u> em <u>andamento,</u> <u>registre</u> <u>custos</u> <u>realizados</u> e <u>trate</u> <u>primeiro</u> as <u>prioridades</u> <u>altas</u> e <u>os</u> <u>prazos</u> <u>vencidos.</u></td></tr>
            <tr class="h12"><th>18</th></tr>
            <tr class="h12"><th>19</th></tr>
            <tr class="h12"><th>20</th></tr>
            <tr class="h12"><th>21</th></tr>
            <tr class="h12"><th>22</th></tr>
            <tr class="h12"><th>23</th></tr>
            <tr class="h12"><th>24</th></tr>
            <tr class="h12"><th>25</th></tr>
            <tr class="h12"><th></th></tr>
          </tbody>
        </table>
      </div>
      <div class="vscroll"><div class="thumb"></div></div>
    </div>
    <div class="hscroll"><div class="thumb"></div><div class="grip"></div></div>

    <div class="tabs">
      <svg class="nav"><use href="#nav"/></svg>
      <button class="add" aria-label="Add sheet"><svg><use href="#addsheet"/></svg></button>
      <div class="tablist" role="tablist">
        <button class="tab" role="tab">Plano 5W2H</button>
        <button class="tab" role="tab">Dashboard</button>
        <button class="tab current" role="tab" aria-selected="true">Instruções</button>
      </div>
    </div>
  </main>

  <aside class="sidebar">
    <button aria-label="Sidebar settings"><svg><use href="#menu"/></svg></button>
    <button aria-label="Properties"><svg><use href="#props"/></svg></button>
    <button aria-label="Styles"><svg><use href="#styles"/></svg></button>
    <button aria-label="Gallery"><svg><use href="#gallery"/></svg></button>
    <button aria-label="Navigator"><svg><use href="#compass"/></svg></button>
    <button aria-label="Functions"><svg><use href="#fx"/></svg></button>
    <div class="handle"></div>
  </aside>
</div>

<footer class="status">
  <span class="doc"><svg><use href="#disk"/></svg>Sheet 3 of 3</span>
  <span class="selected">Selected: 1 row, 6 columns</span>
  <span class="pagestyle">PageStyle_Instruções</span>
  <span class="lang">English (USA)</span>
  <span class="insert"></span>
  <span class="mode"><svg><use href="#selmode"/></svg></span>
  <span class="blank"></span>
  <span class="blank"></span>
  <span class="sum">Average: ; Sum: 0</span>
  <span class="zoom"><button aria-label="Zoom out">−</button><input type="range" min="0" max="100" value="50" aria-label="Zoom"><button aria-label="Zoom in">+</button></span>
  <span class="percent">100%</span>
</footer>
</body>
</html>
```

FILE: styles.css
```css
* { box-sizing: border-box; }

:root {
  --chrome: #f6f5f4;
  --line: #dddcda;
  --ink: #3b3f40;
  --head: #dfdfde;
  --accent: #3584e4;
}

body {
  margin: 0;
  height: 100vh;
  display: flex;
  flex-direction: column;
  overflow: hidden;
  background: var(--chrome);
  color: var(--ink);
  font: 7px/10px "Noto Sans", sans-serif;
}

button, input, select {
  margin: 0;
  padding: 0;
  border: 0;
  background: none;
  color: inherit;
  font: inherit;
}

.sprite { position: absolute; width: 0; height: 0; }

/* Menu bar */
.menubar {
  display: flex;
  align-items: center;
  justify-content: space-between;
  height: 15px;
  padding: 0 5px;
  border-bottom: 1px solid #e4e3e1;
}
.menus { display: flex; gap: 9px; font-size: 8px; }
.close { width: 10px; font-size: 11px; font-weight: 700; }

/* Toolbars */
.toolbar {
  display: flex;
  flex: none;
  align-items: center;
  gap: 5px;
  height: 22px;
  padding-left: 3px;
}
.toolbar + .toolbar { height: 23px; }
.group { display: flex; gap: 1px; position: relative; }
.group + .group:not(.bare)::before {
  content: "";
  position: absolute;
  left: -3px;
  top: 2px;
  bottom: 2px;
  width: 1px;
  background: #e6e5e3;
}
.pair { display: flex; }
.tool {
  display: flex;
  align-items: center;
  justify-content: center;
  width: 18px;
  height: 20px;
  border-radius: 3px;
  font-size: 11px;
  line-height: 14px;
}
.tool svg { width: 14px; height: 14px; }
.tool.on { background: #d3d2cf; }
.tool i { font-family: "Liberation Serif", serif; font-size: 13px; }
.under { border-bottom: 1px solid #3a93cc; line-height: 11px; }
.more { display: flex; align-items: center; width: 6px; }
.more::before {
  content: "";
  border: 2px solid transparent;
  border-top: 3px solid #222;
  border-bottom: 0;
}
.more.dim::before { border-top-color: #b9b8b6; }

.combo {
  display: flex;
  position: relative;
  height: 20px;
  border: 1px solid #d9d8d5;
  border-radius: 3px;
  background: #fff;
  font-size: 8px;
}
.combo select, .combo input {
  flex: 1;
  min-width: 0;
  padding-left: 3px;
  appearance: none;
}
.combo::before {
  content: "";
  order: 1;
  width: 19px;
  border-left: 1px solid #d9d8d5;
  border-radius: 0 3px 3px 0;
  background: #faf9f8;
}
.combo::after {
  content: "";
  position: absolute;
  right: 5px;
  top: 7px;
  border: 4px solid transparent;
  border-top: 4px solid #333;
  border-bottom: 0;
  pointer-events: none;
}
.fontname { width: 116px; font-style: italic; }
.fontsize { width: 57px; }

/* Work area */
.workspace { display: flex; flex: 1; min-height: 0; }
.document { display: flex; flex: 1; flex-direction: column; min-width: 0; }

.formulabar {
  display: flex;
  align-items: center;
  height: 25px;
  padding: 0 3px;
}
.namebox { width: 91px; }
.functions { display: flex; align-items: center; gap: 2px; padding: 0 2px 0 6px; }
.functions button { display: flex; justify-content: center; }
.functions svg { width: 11px; height: 12px; }
.formula {
  flex: 1;
  height: 15px;
  padding: 0 3px;
  border: 1px solid #dddcda;
  background: #fff;
}
.expand { width: 9px; display: flex; justify-content: flex-end; }
.expand::before {
  content: "";
  border: 3px solid transparent;
  border-top: 4px solid #333;
  border-bottom: 0;
}

.viewport { display: flex; flex: 1; min-height: 0; }
.cells { flex: 1; min-width: 0; overflow: hidden; background: #fff; }
table { width: 996px; border-collapse: separate; border-spacing: 0; table-layout: fixed; }
.c-head { width: 19px; }
.c-a { width: 117px; }
.c-b { width: 376px; }
.c-s { width: 16px; }
.c-n { width: 35px; }

th {
  overflow: hidden;
  padding: 0;
  border-right: 1px solid #c3c3c2;
  border-bottom: 1px solid #c3c3c2;
  background: var(--head);
  color: #4a4a4a;
  font-weight: 400;
  line-height: 10px;
}
thead th { height: 12px; border-top: 1px solid #c3c3c2; line-height: 10px; }
th.sel {
  border-color: #2f78d2;
  background: var(--accent);
  color: #fff;
  font-weight: 700;
}
.h11 { height: 11px; }
.h12 { height: 12px; }
.h18 { height: 18px; }
.h21 { height: 21px; }
.h22 { height: 22px; }
.h26 { height: 26px; }
.h27 { height: 27px; }
.h33 { height: 33px; }

td {
  padding: 0;
  font: 700 7px/9px Lato, sans-serif;
  text-align: center;
}
u { text-decoration: underline wavy #d0383c 1px; text-underline-offset: -1px; text-decoration-skip-ink: none; }
.title {
  position: relative;
  border: 1px solid #8db4e6;
  border-left: 0;
  border-bottom: 2px solid #5a92d8;
  background: #1e293b;
  color: #fff;
  font-size: 11px;
  line-height: 14px;
  text-align: left;
}
.title::after {
  content: "";
  position: absolute;
  right: -2px;
  bottom: -3px;
  width: 3px;
  height: 3px;
  background: var(--accent);
}
.teal, .green, .blue { border-bottom: 1px solid #b9d8d8; color: #fff; }
.teal { padding: 0 20px; background: #0f766e; line-height: 8px; }
.green { background: #10b981; }
.blue { background: #1d4ed8; font-size: 8px; }
.lead { border-bottom: 1px solid #d5dedd; }
.note {
  padding: 0 1px;
  border: 1px solid #d5dedd;
  border-width: 0 1px 1px 0;
  color: #333d4b;
  font-weight: 400;
  line-height: 8px;
  text-align: left;
  vertical-align: top;
}
.mint { background: #f0fdfa; }
.cream { background: #fffbeb; }

.vscroll { width: 8px; padding: 3px 2px; background: #cfcfce; }
.vscroll .thumb { height: 48%; border-radius: 3px; background: #7d7f7f; }
.hscroll {
  display: flex;
  justify-content: space-between;
  height: 8px;
  margin-right: 8px;
  padding: 2px 0 1px 2px;
  background: #cfcfce;
}
.hscroll .thumb { width: 47%; border-radius: 3px; background: #7d7f7f; }
.hscroll .grip { width: 2px; background: #7d7f7f; }

/* Sheet tabs */
.tabs { display: flex; align-items: center; height: 14px; padding-left: 5px; }
.nav { width: 52px; height: 12px; }
.add { display: flex; width: 22px; padding-left: 6px; }
.add svg { width: 13px; height: 13px; }
.tablist { display: flex; align-self: stretch; }
.tab { padding: 0 7px; border-right: 1px solid #dddcda; }
.tab.current { border-right: 0; border-bottom: 1px solid #777; background: #fff; font-weight: 700; }

/* Sidebar */
.sidebar {
  position: relative;
  display: flex;
  flex-direction: column;
  align-items: center;
  gap: 11px;
  width: 33px;
  padding-top: 5px;
  border-left: 1px solid #d5d4d2;
}
.sidebar button { display: flex; width: 14px; height: 14px; }
.sidebar svg { width: 14px; height: 14px; }
.handle {
  position: absolute;
  left: -1px;
  top: 229px;
  display: flex;
  align-items: center;
  width: 4px;
  height: 43px;
  background: #8d8f8f;
}
.handle::before {
  content: "";
  border: 2px solid transparent;
  border-left: 3px solid #fff;
  border-right: 0;
}

/* Status bar */
.status {
  display: flex;
  align-items: center;
  height: 14px;
  border-top: 1px solid #d5d4d2;
}
.status > span { display: flex; align-items: center; height: 12px; }
.status > span + span { border-left: 1px solid #eae9e7; }
.doc { width: 152px; gap: 8px; padding-left: 5px; }
.doc svg { width: 10px; height: 10px; }
.selected { width: 190px; padding-left: 4px; }
.pagestyle { width: 174px; padding-left: 4px; }
.lang { width: 143px; justify-content: center; }
.insert { width: 39px; }
.mode { width: 26px; justify-content: center; }
.mode svg { width: 18px; height: 10px; }
.blank { width: 17px; }
.sum { flex: 1; justify-content: center; }
.zoom { width: 79px; gap: 2px; padding-left: 4px; }
.zoom button { font-size: 11px; font-weight: 700; }
.zoom input { flex: 1; min-width: 0; height: 10px; appearance: none; }
.zoom input::-webkit-slider-runnable-track { height: 1px; background: #9a9997; }
.zoom input::-webkit-slider-thumb {
  width: 3px;
  height: 7px;
  margin-top: -3px;
  border: 1px solid #666;
  background: #ccc;
  appearance: none;
}
.status > .percent { width: 31px; padding-right: 2px; justify-content: center; border-left: 0; }
```
